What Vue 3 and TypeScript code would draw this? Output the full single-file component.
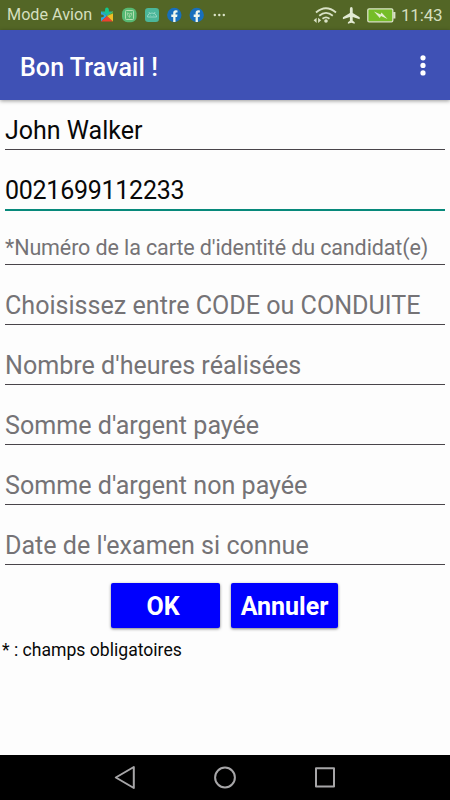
<script setup lang="ts">
interface Field {
  text: string
  kind: string
}

const fields: Field[] = [
  { text: 'John Walker', kind: 'filled' },
  { text: '0021699112233', kind: 'filled focused' },
  { text: "*Numéro de la carte d'identité du candidat(e)", kind: 'compact' },
  { text: 'Choisissez entre CODE ou CONDUITE', kind: 'hint' },
  { text: "Nombre d'heures réalisées", kind: 'hint' },
  { text: "Somme d'argent payée", kind: 'hint' },
  { text: "Somme d'argent non payée", kind: 'hint' },
  { text: "Date de l'examen si connue", kind: 'hint' },
]
</script>

<template>
  <div class="screen">
    <header class="status">
      <span class="carrier">Mode Avion</span>
      <svg class="notes" width="134" height="30" viewBox="100 0 134 30">
        <path d="M101 11.5h4.2q-.4-3.5 1.8-3.5t1.8 3.5h4.2v3.5l-6 1-6-4z" fill="#20b8a0" />
        <path d="M105.5 8q1.5-1 2.8 0v5h-2.8z" fill="#12c98b" />
        <path d="M101 11.5l6 4.5-6 5.5v-4q3-.2 3-1.6t-3-1.4z" fill="#2ca6e4" />
        <path d="M101 21.5l6-5.5 6 5.5z" fill="#ec4130" />
        <path d="M113 11.5v10l-6-5.5z" fill="#f0bd25" />
        <path d="M107 16l6-4.5v2z" fill="#43a747" />
        <rect x="122" y="7.8" width="14.6" height="14.4" rx="5.5" fill="#57b873" />
        <rect x="125.5" y="10.5" width="8" height="9" rx=".8" fill="none" stroke="#b4dfb3" />
        <path d="M127.5 12.8l2 1.2 2-1v2.3l-2 1.8-2-1.8zM129.5 14.5v3" fill="none" stroke="#a6d7a8" stroke-width=".8" />
        <rect x="145" y="8" width="14" height="14" rx="3.2" fill="#4bb69a" />
        <path d="M147.5 17v-1q.7-3 4.5-3t4.5 3v1zM148.8 12l1.2 1.5M155.2 12l-1.2 1.5M150 15.3h.6M153.5 15.3h.6" fill="none" stroke="#9ad9c4" stroke-width=".9" />
        <g v-for="x in [174.3, 196.7]" :key="x" :transform="`translate(${x} 15)`">
          <circle r="7.2" fill="#176fbd" />
          <path d="M-1.1 7.1V2H-3V-.4h1.9V-2.2Q-1.1-4.8 1.6-4.8l1.6.2v2H2.2Q1.2-2.6 1.2-1.6v1.2h2L2.8 2H1.2v5.1z" fill="#edf5ed" />
        </g>
        <g fill="#dce4c9">
          <circle cx="214.8" cy="15" r="1.2" />
          <circle cx="219.3" cy="15" r="1.2" />
          <circle cx="223.8" cy="15" r="1.2" />
        </g>
      </svg>
      <svg class="system" width="88" height="30" viewBox="310 0 88 30">
        <g fill="none" stroke="#d9e2c6" stroke-width="1.8">
          <path d="M316 12.5q9.8-8.5 20 0M319.2 15.7q6.8-5.7 13.6 0M322.5 18.8q3.5-2.8 7 0" />
        </g>
        <circle cx="326" cy="21" r="1.8" fill="#d9e2c6" />
        <path d="M313.6 20.3l3-2.6v5.2zM321.1 20.3l-3-2.6v5.2z" fill="#d9e2c6" />
        <path d="M351.3 7q1.4 0 1.4 1.8v4.1l7 4.4v2l-7-2.3v3.7l2 1.6v1.4l-3.4-1-3.4 1v-1.4l2-1.6V17l-7 2.3v-2l7-4.4V8.8q0-1.8 1.4-1.8z" fill="#e2ead3" />
        <rect x="367.8" y="8.8" width="25" height="13" rx="1.3" fill="#75bd28" stroke="#d9e2c6" stroke-width="1.3" />
        <rect x="393.2" y="12" width="2.2" height="6.5" fill="#d9e2c6" />
        <path d="M374 11.5l6.5 3 1-2 6 6.5-6.5-3-1.2 2z" fill="#e4efd0" />
      </svg>
      <span class="clock">11:43</span>
    </header>
    <nav class="appbar">
      <h1>Bon Travail !</h1>
      <svg width="8" height="24" viewBox="0 0 8 24" fill="#fff">
        <circle cx="4" cy="2.8" r="2.6" />
        <circle cx="4" cy="10.4" r="2.6" />
        <circle cx="4" cy="17.9" r="2.6" />
      </svg>
    </nav>
    <main>
      <div v-for="f in fields" :key="f.text" class="field" :class="f.kind">
        <span>{{ f.text }}</span>
      </div>
      <div class="actions">
        <button class="ok" type="button">OK</button>
        <button class="cancel" type="button">Annuler</button>
      </div>
      <p class="note">* : champs obligatoires</p>
    </main>
    <footer class="navbar">
      <svg width="450" height="45" viewBox="0 0 450 45" fill="none" stroke="#a7a6a8" stroke-width="2" stroke-linejoin="round">
        <path d="M115.8 22.5l18-10.5v21z" />
        <circle cx="225" cy="22.5" r="9.9" />
        <rect x="316" y="13.3" width="18" height="18.2" />
      </svg>
    </footer>
  </div>
</template>

<style>
body {
  margin: 0;
}
</style>

<style scoped>
.screen {
  width: 450px;
  height: 800px;
  display: flex;
  flex-direction: column;
  overflow: hidden;
  background: #fdfdfd;
  font-family: Roboto, sans-serif;
}
.status {
  height: 30px;
  display: flex;
  align-items: center;
  box-sizing: border-box;
  padding-left: 7px;
  background: #536626;
  color: #d5dfbf;
  font-size: 16.2px;
  line-height: 32px;
  white-space: nowrap;
}
.carrier {
  width: 93px;
}
.system {
  margin-left: 76px;
}
.clock {
  margin-left: 3px;
  font-size: 17px;
  letter-spacing: -0.2px;
}
.appbar {
  height: 70px;
  display: flex;
  align-items: center;
  justify-content: space-between;
  box-sizing: border-box;
  padding: 4px 23.5px 0 20px;
  background: #3f51b5;
  box-shadow: 0 1px 4px rgba(0, 0, 0, 0.4);
}
h1 {
  margin: 0;
  color: #fff;
  font-size: 25px;
  font-weight: 500;
  letter-spacing: 0.08px;
}
main {
  flex: 1;
}
.field {
  height: 60px;
  box-sizing: border-box;
  margin: 0 5px;
  padding-top: 16px;
  border-bottom: 1px solid #49454a;
  color: #757376;
  font-size: 25px;
  line-height: 30px;
  white-space: nowrap;
}
.field:first-child {
  height: 50px;
}
.filled {
  color: #080808;
}
.focused {
  height: 61px;
  padding-top: 26px;
  border-bottom: 2px solid #07897b;
  letter-spacing: -0.26px;
}
.compact {
  height: 54px;
  padding-top: 22px;
  font-size: 21.5px;
  letter-spacing: -0.11px;
}
.hint {
  padding-top: 26px;
  font-size: 25.1px;
}
.actions {
  display: flex;
  gap: 11px;
  padding: 18px 0 0 111px;
}
button {
  width: 109px;
  height: 45px;
  padding: 2px 0 0;
  border: 0;
  border-radius: 2px;
  background: #0000fe;
  box-shadow: 0 1px 3px rgba(0, 0, 0, 0.5);
  color: #fff;
  font-family: inherit;
  font-size: 25px;
  font-weight: 700;
}
.ok {
  padding-right: 5px;
}
.cancel {
  width: 107px;
}
.note {
  margin: 12px 0 0 2px;
  color: #080808;
  font-size: 17.6px;
  line-height: 20px;
}
.navbar {
  height: 45px;
  background: #000;
}
.navbar svg {
  display: block;
}
</style>
